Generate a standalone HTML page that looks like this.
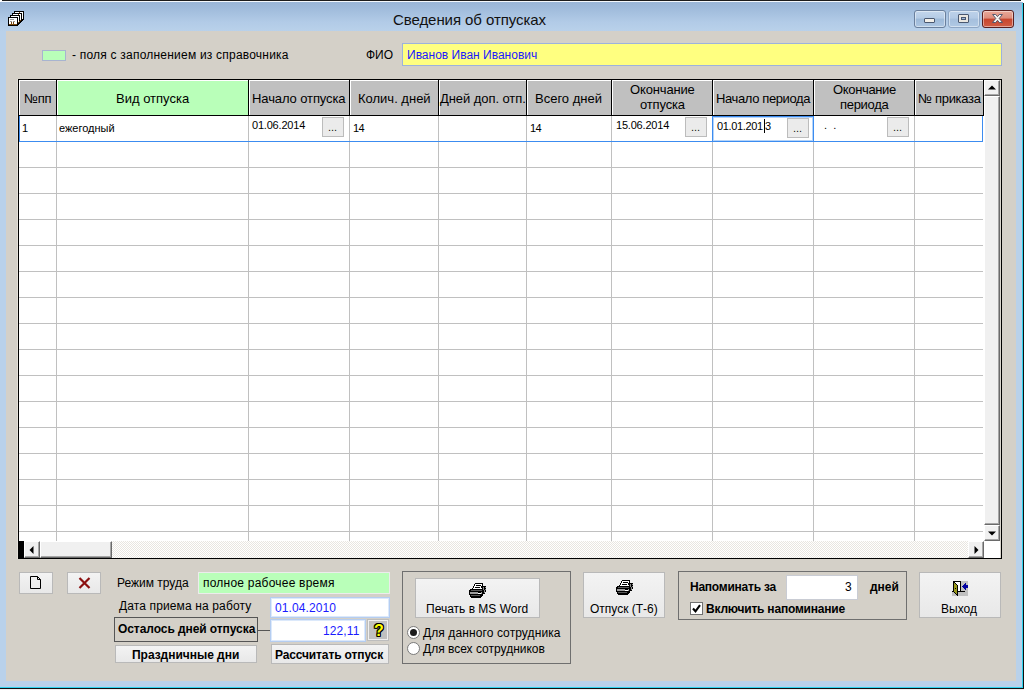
<!DOCTYPE html>
<html lang="ru">
<head>
<meta charset="utf-8">
<title>Сведения об отпусках</title>
<style>
html,body{margin:0;padding:0;}
body{width:1024px;height:690px;position:relative;overflow:hidden;background:#b9d1ea;font-family:"Liberation Sans",sans-serif;font-size:12px;color:#000;}
.a,.t{position:absolute;}
.t{white-space:nowrap;line-height:1;}
.b{font-weight:bold;}
.blue{color:#1a1aff;}
#titlebar{left:0;top:0;width:1024px;height:31px;background:linear-gradient(#98b4d6 0px,#9fbbdb 8px,#b2cbe7 22px,#b9d1ea 31px);}
#client{left:6px;top:31px;width:1010px;height:650px;background:#d4d0c8;}
.hd{position:absolute;top:80px;height:35px;background:#c0c0c0;border-left:1px solid #fff;border-top:1px solid #fff;box-sizing:border-box;}
.vl{position:absolute;top:79px;width:1px;height:37px;background:#000;}
.gv{position:absolute;top:116px;width:1px;height:425px;background:#c0c0c0;}
.gh{position:absolute;left:19px;width:964px;height:1px;background:#c0c0c0;}
.btn{position:absolute;box-sizing:border-box;background:linear-gradient(#f3f3f3,#e8e8e8);border:1px solid #b9b9b9;}
.dots{position:absolute;box-sizing:border-box;background:#ebebeb;border:1px solid #bcbcbc;}
.grp{position:absolute;box-sizing:border-box;border:1px solid #6f6f6f;}
</style>
</head>
<body>
<div class="a" style="left:0;top:0;width:1024px;height:690px;background:#b9d1ea;"></div>
<div id="titlebar" class="a"></div>
<div class="a" style="left:0px;top:0px;width:1024px;height:1px;background:#1c1c1c;"></div>
<div class="a" style="left:0px;top:1px;width:1024px;height:1px;background:#f4f8fc;"></div>
<div class="a" style="left:0px;top:688px;width:1024px;height:1px;background:#101010;"></div>
<div class="a" style="left:0px;top:687px;width:1023px;height:1px;background:#2fd3ee;"></div>
<div class="a" style="left:0px;top:689px;width:1024px;height:1px;background:#f3eeee;"></div>
<div class="a" style="left:1023px;top:2px;width:1px;height:687px;background:#101010;"></div>
<div class="a" style="left:1022px;top:3px;width:1px;height:685px;background:#2fd3ee;"></div>
<div class="a" style="left:1022px;top:0px;width:2px;height:2px;background:#fff;"></div>
<div class="a" style="left:1021px;top:0px;width:1px;height:1px;background:#fff;"></div>
<div class="a" style="left:1023px;top:2px;width:1px;height:1px;background:#fff;"></div>
<div class="a" style="left:0px;top:0px;width:2px;height:1px;background:#fff;"></div>
<div class="a" style="left:0px;top:1px;width:1px;height:1px;background:#fff;"></div>
<div id="client" class="a"></div>
<span class="t" style="left:393px;top:12px;font-size:15px;letter-spacing:-0.07px;color:#111;">Сведения об отпусках</span>
<svg class="a" style="left:8px;top:11px" width="16" height="15" viewBox="0 0 16 15" shape-rendering="crispEdges"><rect x="6" y="0" width="10" height="1" fill="#000"/><rect x="6" y="1" width="1" height="1" fill="#000"/><rect x="7" y="1" width="4" height="1" fill="#fff"/><rect x="11" y="1" width="1" height="1" fill="#7a4a12"/><rect x="12" y="1" width="3" height="1" fill="#fff"/><rect x="15" y="1" width="1" height="1" fill="#000"/><rect x="4" y="2" width="10" height="1" fill="#000"/><rect x="14" y="2" width="1" height="1" fill="#fff"/><rect x="15" y="2" width="1" height="1" fill="#000"/><rect x="4" y="3" width="1" height="1" fill="#000"/><rect x="5" y="3" width="5" height="1" fill="#fff"/><rect x="10" y="3" width="1" height="1" fill="#7a4a12"/><rect x="11" y="3" width="2" height="1" fill="#fff"/><rect x="13" y="3" width="1" height="1" fill="#000"/><rect x="14" y="3" width="1" height="1" fill="#fff"/><rect x="15" y="3" width="1" height="1" fill="#000"/><rect x="2" y="4" width="10" height="1" fill="#000"/><rect x="12" y="4" width="1" height="1" fill="#fff"/><rect x="13" y="4" width="1" height="1" fill="#000"/><rect x="14" y="4" width="1" height="1" fill="#fff"/><rect x="15" y="4" width="1" height="1" fill="#000"/><rect x="2" y="5" width="1" height="1" fill="#000"/><rect x="3" y="5" width="8" height="1" fill="#fff"/><rect x="11" y="5" width="1" height="1" fill="#000"/><rect x="12" y="5" width="1" height="1" fill="#fff"/><rect x="13" y="5" width="1" height="1" fill="#000"/><rect x="14" y="5" width="1" height="1" fill="#fff"/><rect x="15" y="5" width="1" height="1" fill="#000"/><rect x="0" y="6" width="10" height="1" fill="#000"/><rect x="10" y="6" width="1" height="1" fill="#fff"/><rect x="11" y="6" width="1" height="1" fill="#000"/><rect x="12" y="6" width="1" height="1" fill="#fff"/><rect x="13" y="6" width="1" height="1" fill="#000"/><rect x="14" y="6" width="1" height="1" fill="#fff"/><rect x="15" y="6" width="1" height="1" fill="#000"/><rect x="0" y="7" width="1" height="1" fill="#000"/><rect x="1" y="7" width="8" height="1" fill="#fff"/><rect x="9" y="7" width="1" height="1" fill="#000"/><rect x="10" y="7" width="1" height="1" fill="#fff"/><rect x="11" y="7" width="1" height="1" fill="#000"/><rect x="12" y="7" width="1" height="1" fill="#fff"/><rect x="13" y="7" width="1" height="1" fill="#000"/><rect x="14" y="7" width="1" height="1" fill="#fff"/><rect x="15" y="7" width="1" height="1" fill="#000"/><rect x="0" y="8" width="1" height="1" fill="#000"/><rect x="1" y="8" width="1" height="1" fill="#fff"/><rect x="2" y="8" width="4" height="1" fill="#9a9a9a"/><rect x="6" y="8" width="3" height="1" fill="#fff"/><rect x="9" y="8" width="1" height="1" fill="#000"/><rect x="10" y="8" width="1" height="1" fill="#fff"/><rect x="11" y="8" width="1" height="1" fill="#000"/><rect x="12" y="8" width="1" height="1" fill="#fff"/><rect x="13" y="8" width="3" height="1" fill="#000"/><rect x="0" y="9" width="1" height="1" fill="#000"/><rect x="1" y="9" width="8" height="1" fill="#fff"/><rect x="9" y="9" width="1" height="1" fill="#000"/><rect x="10" y="9" width="1" height="1" fill="#fff"/><rect x="11" y="9" width="1" height="1" fill="#000"/><rect x="12" y="9" width="1" height="1" fill="#7a4a12"/><rect x="13" y="9" width="2" height="1" fill="#000"/><rect x="0" y="10" width="1" height="1" fill="#000"/><rect x="1" y="10" width="1" height="1" fill="#fff"/><rect x="2" y="10" width="2" height="1" fill="#9a9a9a"/><rect x="4" y="10" width="1" height="1" fill="#fff"/><rect x="5" y="10" width="2" height="1" fill="#9a9a9a"/><rect x="7" y="10" width="2" height="1" fill="#fff"/><rect x="9" y="10" width="1" height="1" fill="#000"/><rect x="10" y="10" width="1" height="1" fill="#fff"/><rect x="11" y="10" width="1" height="1" fill="#7a4a12"/><rect x="12" y="10" width="2" height="1" fill="#000"/><rect x="0" y="11" width="1" height="1" fill="#000"/><rect x="1" y="11" width="2" height="1" fill="#fff"/><rect x="3" y="11" width="1" height="1" fill="#7a4a12"/><rect x="4" y="11" width="1" height="1" fill="#fff"/><rect x="5" y="11" width="1" height="1" fill="#7a4a12"/><rect x="6" y="11" width="3" height="1" fill="#fff"/><rect x="9" y="11" width="1" height="1" fill="#000"/><rect x="10" y="11" width="1" height="1" fill="#7a4a12"/><rect x="11" y="11" width="2" height="1" fill="#000"/><rect x="0" y="12" width="1" height="1" fill="#000"/><rect x="1" y="12" width="2" height="1" fill="#fff"/><rect x="3" y="12" width="1" height="1" fill="#7a4a12"/><rect x="4" y="12" width="1" height="1" fill="#fff"/><rect x="5" y="12" width="1" height="1" fill="#7a4a12"/><rect x="6" y="12" width="3" height="1" fill="#fff"/><rect x="9" y="12" width="3" height="1" fill="#000"/><rect x="0" y="13" width="1" height="1" fill="#000"/><rect x="1" y="13" width="8" height="1" fill="#7a4a12"/><rect x="9" y="13" width="2" height="1" fill="#000"/><rect x="0" y="14" width="10" height="1" fill="#000"/></svg>
<div class="a" style="left:914px;top:10px;width:32px;height:18px;box-sizing:border-box;border:1px solid #6a7f9c;border-radius:3px;background:linear-gradient(#c3d6ec 0%,#b4cbe5 45%,#9db9d8 50%,#adc6e2 100%);box-shadow:inset 0 0 0 1px rgba(255,255,255,.45);"></div>
<div class="a" style="left:948px;top:10px;width:32px;height:18px;box-sizing:border-box;border:1px solid #8ea6c4;border-radius:3px;background:linear-gradient(#bdd2ea 0%,#b3cae5 45%,#a5bfdd 50%,#b0c9e4 100%);box-shadow:inset 0 0 0 1px rgba(255,255,255,.45);"></div>
<div class="a" style="left:982px;top:10px;width:32px;height:18px;box-sizing:border-box;border:1px solid #5a1f1f;border-radius:3px;background:linear-gradient(#e9a99a 0%,#dd8c7b 45%,#c8452d 50%,#cf5d45 100%);box-shadow:inset 0 0 0 1px rgba(255,255,255,.45);"></div>
<div class="a" style="left:924px;top:18px;width:11px;height:5px;box-sizing:border-box;background:#f2efe9;border:1px solid #4a5870;border-radius:1px;"></div>
<div class="a" style="left:958px;top:14px;width:11px;height:9px;box-sizing:border-box;background:#e9e6e0;border:1px solid #4a5870;border-radius:1px;"></div>
<div class="a" style="left:961px;top:17px;width:5px;height:3px;box-sizing:border-box;background:#9fb6d8;border:1px solid #4a5870;"></div>
<svg class="a" style="left:992px;top:14px" width="11" height="9" viewBox="0 0 11 9">
<path d="M0.6 0.5h3.1L5.5 2.6 7.3 0.5h3.1L7.2 4.4 10.5 8.5H7.3L5.5 6.3 3.7 8.5H0.5l3.3-4.1z" fill="#f6f4f0" stroke="#47506a" stroke-width="0.9"/></svg>
<div class="a" style="left:42px;top:50px;width:24px;height:11px;background:#b9ffb9;box-sizing:border-box;border:1px solid #a8b4d0;"></div>
<span class="t" style="left:72px;top:49px;font-size:12px;letter-spacing:0.215px;">- поля с заполнением из справочника</span>
<span class="t" style="left:366px;top:49px;font-size:12px;">ФИО</span>
<div class="a" style="left:402px;top:43px;width:600px;height:23px;background:#ffff80;box-sizing:border-box;border:1px solid #9db3dc;"></div>
<span class="t blue" style="left:407px;top:49px;font-size:12px;">Иванов Иван Иванович</span>
<div class="a" style="left:17px;top:79px;width:1px;height:480px;background:#e4e0d8;"></div>
<div class="a" style="left:18px;top:79px;width:984px;height:480px;background:#000;"></div>
<div class="a" style="left:19px;top:80px;width:965px;height:461px;background:#fff;"></div>
<div class="hd" style="left:19px;width:37px;background:#c0c0c0;border-color:#ffffff;"></div>
<div class="hd" style="left:57px;width:191px;background:#b9ffb9;border-color:#ffffff;"></div>
<div class="hd" style="left:249px;width:100px;background:#c0c0c0;border-color:#ffffff;"></div>
<div class="hd" style="left:350px;width:88px;background:#c0c0c0;border-color:#ffffff;"></div>
<div class="hd" style="left:439px;width:87px;background:#c0c0c0;border-color:#ffffff;"></div>
<div class="hd" style="left:527px;width:84px;background:#c0c0c0;border-color:#ffffff;"></div>
<div class="hd" style="left:612px;width:100px;background:#c0c0c0;border-color:#ffffff;"></div>
<div class="hd" style="left:713px;width:100px;background:#c0c0c0;border-color:#ffffff;"></div>
<div class="hd" style="left:814px;width:100px;background:#c0c0c0;border-color:#ffffff;"></div>
<div class="hd" style="left:915px;width:68px;background:#c0c0c0;border-color:#ffffff;"></div>
<div class="vl" style="left:56px"></div>
<div class="vl" style="left:248px"></div>
<div class="vl" style="left:349px"></div>
<div class="vl" style="left:438px"></div>
<div class="vl" style="left:526px"></div>
<div class="vl" style="left:611px"></div>
<div class="vl" style="left:712px"></div>
<div class="vl" style="left:813px"></div>
<div class="vl" style="left:914px"></div>
<div class="vl" style="left:983px"></div>
<div class="a" style="left:19px;top:115px;width:965px;height:1px;background:#000;"></div>
<div class="gv" style="left:56px"></div>
<div class="gv" style="left:248px"></div>
<div class="gv" style="left:349px"></div>
<div class="gv" style="left:438px"></div>
<div class="gv" style="left:526px"></div>
<div class="gv" style="left:611px"></div>
<div class="gv" style="left:712px"></div>
<div class="gv" style="left:813px"></div>
<div class="gv" style="left:914px"></div>
<div class="gh" style="top:141px"></div>
<div class="gh" style="top:167px"></div>
<div class="gh" style="top:193px"></div>
<div class="gh" style="top:219px"></div>
<div class="gh" style="top:245px"></div>
<div class="gh" style="top:271px"></div>
<div class="gh" style="top:297px"></div>
<div class="gh" style="top:323px"></div>
<div class="gh" style="top:349px"></div>
<div class="gh" style="top:375px"></div>
<div class="gh" style="top:401px"></div>
<div class="gh" style="top:427px"></div>
<div class="gh" style="top:453px"></div>
<div class="gh" style="top:479px"></div>
<div class="gh" style="top:505px"></div>
<div class="gh" style="top:531px"></div>
<span class="t" style="left:24px;top:92px;font-size:13px;letter-spacing:-0.3px;">№пп</span>
<span class="t" style="left:116px;top:92px;font-size:13px;">Вид отпуска</span>
<span class="t" style="left:252px;top:92px;font-size:13px;letter-spacing:-0.1px;">Начало отпуска</span>
<span class="t" style="left:358px;top:92px;font-size:13px;">Колич. дней</span>
<span class="t" style="left:440px;top:92px;font-size:13px;letter-spacing:-0.07px;">Дней доп. отп.</span>
<span class="t" style="left:535px;top:92px;font-size:13px;">Всего дней</span>
<span class="t" style="left:630px;top:83px;font-size:13px;letter-spacing:-0.15px;">Окончание</span>
<span class="t" style="left:640px;top:98px;font-size:13px;letter-spacing:-0.15px;">отпуска</span>
<span class="t" style="left:716px;top:92px;font-size:13px;letter-spacing:-0.38px;">Начало периода</span>
<span class="t" style="left:833px;top:83px;font-size:13px;letter-spacing:-0.35px;">Окончание</span>
<span class="t" style="left:840px;top:98px;font-size:13px;letter-spacing:-0.3px;">периода</span>
<span class="t" style="left:918px;top:92px;font-size:13px;letter-spacing:-0.3px;">№ приказа</span>
<div class="a" style="left:19px;top:116px;width:964px;height:26px;box-sizing:border-box;border:1px solid #3c8cf0;border-top:none;"></div>
<span class="t" style="left:22px;top:123px;font-size:11px;">1</span>
<span class="t" style="left:59px;top:123px;font-size:11px;">ежегодный</span>
<span class="t" style="left:252px;top:120px;font-size:11px;letter-spacing:-0.2px;">01.06.2014</span>
<span class="t" style="left:353px;top:123px;font-size:11px;letter-spacing:-0.5px;">14</span>
<span class="t" style="left:530px;top:123px;font-size:11px;letter-spacing:-0.5px;">14</span>
<span class="t" style="left:616px;top:120px;font-size:11px;letter-spacing:-0.2px;">15.06.2014</span>
<span class="t" style="left:824px;top:120px;font-size:11px;">.&nbsp;&nbsp;.</span>
<div class="a" style="left:712px;top:116px;width:102px;height:26px;background:#fff;box-sizing:border-box;border:1px solid #3c8cf0;box-shadow:inset 0 0 0 1px #b5d4f9;"></div>
<span class="t" style="left:717px;top:121px;font-size:11px;letter-spacing:-0.35px;">01.01.201<span style="letter-spacing:0;margin-left:2.1px">3</span></span>
<div class="a" style="left:764px;top:119px;width:1px;height:14px;background:#000;"></div>
<div class="dots" style="left:322px;top:117px;width:22px;height:20px;"></div>
<span class="t" style="left:328px;top:122px;font-size:11px;color:#111;">...</span>
<div class="dots" style="left:685px;top:117px;width:22px;height:20px;"></div>
<span class="t" style="left:691px;top:122px;font-size:11px;color:#111;">...</span>
<div class="dots" style="left:787px;top:118px;width:22px;height:20px;"></div>
<span class="t" style="left:793px;top:123px;font-size:11px;color:#111;">...</span>
<div class="dots" style="left:887px;top:117px;width:22px;height:20px;"></div>
<span class="t" style="left:893px;top:122px;font-size:11px;color:#111;">...</span>
<div class="a" style="left:984px;top:80px;width:16px;height:461px;background:#f0f0f0;"></div>
<div class="a" style="left:1000px;top:80px;width:1px;height:478px;background:#dad6ce;"></div>
<div class="a" style="left:984px;top:80px;width:16px;height:16px;background:#f0f0f0;box-sizing:border-box;border-left:1px solid #fff;border-top:1px solid #fff;border-right:1px solid #6a6a6a;border-bottom:1px solid #6a6a6a;box-shadow:inset -1px -1px 0 #a6a6a6;"></div>
<div class="a" style="left:984px;top:96px;width:16px;height:429px;background:#f0f0f0;box-sizing:border-box;border-left:1px solid #fff;border-top:1px solid #fff;border-right:1px solid #6a6a6a;border-bottom:1px solid #6a6a6a;box-shadow:inset -1px -1px 0 #a6a6a6;"></div>
<div class="a" style="left:984px;top:525px;width:16px;height:16px;background:#f0f0f0;box-sizing:border-box;border-left:1px solid #fff;border-top:1px solid #fff;border-right:1px solid #6a6a6a;border-bottom:1px solid #6a6a6a;box-shadow:inset -1px -1px 0 #a6a6a6;"></div>
<svg class="a" style="left:988px;top:85px" width="8" height="5"><path d="M0 4.5h8L4 0.5z" fill="#000"/></svg>
<svg class="a" style="left:988px;top:531px" width="8" height="5"><path d="M0 0.5h8L4 4.5z" fill="#000"/></svg>
<div class="a" style="left:19px;top:541px;width:965px;height:17px;background:repeating-conic-gradient(#ffffff 0 25%,#e9e6e0 0 50%) 0 0/2px 2px;"></div>
<div class="a" style="left:18px;top:541px;width:6px;height:17px;background:#000;"></div>
<div class="a" style="left:984px;top:541px;width:16px;height:17px;background:#fff;"></div>
<div class="a" style="left:24px;top:541px;width:16px;height:17px;background:#f0f0f0;box-sizing:border-box;border-left:1px solid #fff;border-top:1px solid #fff;border-right:1px solid #6a6a6a;border-bottom:1px solid #6a6a6a;box-shadow:inset -1px -1px 0 #a6a6a6;"></div>
<div class="a" style="left:40px;top:541px;width:72px;height:17px;background:#f0f0f0;box-sizing:border-box;border-left:1px solid #fff;border-top:1px solid #fff;border-right:1px solid #6a6a6a;border-bottom:1px solid #6a6a6a;box-shadow:inset -1px -1px 0 #a6a6a6;"></div>
<div class="a" style="left:968px;top:541px;width:16px;height:17px;background:#f0f0f0;box-sizing:border-box;border-left:1px solid #fff;border-top:1px solid #fff;border-right:1px solid #6a6a6a;border-bottom:1px solid #6a6a6a;box-shadow:inset -1px -1px 0 #a6a6a6;"></div>
<svg class="a" style="left:29px;top:546px" width="5" height="8"><path d="M4.5 0v8L0.5 4z" fill="#000"/></svg>
<svg class="a" style="left:974px;top:546px" width="5" height="8"><path d="M0.5 0v8L4.5 4z" fill="#000"/></svg>
<div class="btn" style="left:19px;top:572px;width:34px;height:22px;"></div>
<svg class="a" style="left:30px;top:576px" width="12" height="14" viewBox="0 0 12 14"><path d="M0.5 0.5h7l3 3v9h-10z" fill="none" stroke="#000"/><path d="M7.5 0.5v3h3" fill="none" stroke="#000"/></svg>
<div class="btn" style="left:67px;top:572px;width:34px;height:22px;"></div>
<svg class="a" style="left:78px;top:577px" width="13" height="12" viewBox="0 0 13 12"><path d="M1.5 1l10 10M11.5 1l-10 10" stroke="#8b1010" stroke-width="2.2" fill="none"/></svg>
<span class="t" style="left:117px;top:577px;font-size:12px;">Режим труда</span>
<div class="a" style="left:198px;top:572px;width:192px;height:22px;background:#b9ffb9;box-sizing:border-box;border:1px solid #ececec;"></div>
<span class="t" style="left:203px;top:577px;font-size:12px;letter-spacing:0.22px;">полное рабочее время</span>
<span class="t" style="left:119px;top:600px;font-size:12px;letter-spacing:0.13px;">Дата приема на работу</span>
<div class="a" style="left:270px;top:597px;width:120px;height:21px;background:#fff;box-sizing:border-box;border:1px solid #b5cdf0;box-shadow:inset 0 0 0 1px #dce9fb;"></div>
<span class="t blue" style="left:275px;top:602px;font-size:12px;letter-spacing:0.1px;">01.04.2010</span>
<div class="grp" style="left:114px;top:617px;width:144px;height:25px;border-color:#555;"></div>
<span class="t b" style="left:118px;top:623px;font-size:12px;letter-spacing:-0.07px;">Осталось дней отпуска</span>
<div class="a" style="left:258px;top:630px;width:12px;height:1px;background:#555;"></div>
<div class="a" style="left:270px;top:619px;width:96px;height:23px;background:#fff;box-sizing:border-box;border:1px solid #b5cdf0;box-shadow:inset 0 0 0 1px #dce9fb;"></div>
<span class="t blue" style="left:323px;top:625px;font-size:12px;letter-spacing:0.1px;">122,11</span>
<div class="a" style="left:367px;top:619px;width:22px;height:22px;background:#c0c0c0;box-sizing:border-box;border:1px solid #bdbdbd;box-shadow:inset 0 0 0 1px #efefef;"></div>
<span class="t b" style="left:374px;top:623px;font-size:16px;color:#ffff00;text-shadow:1px 0 0 #000,-1px 0 0 #000,0 1px 0 #000,0 -1px 0 #000,1px 1px 0 #000,-1px -1px 0 #000,1px -1px 0 #000,-1px 1px 0 #000;">?</span>
<div class="btn" style="left:115px;top:645px;width:142px;height:18px;"></div>
<span class="t b" style="left:132px;top:649px;font-size:12px;letter-spacing:-0.03px;">Праздничные дни</span>
<div class="btn" style="left:271px;top:644px;width:118px;height:20px;"></div>
<span class="t b" style="left:275px;top:649px;font-size:12px;letter-spacing:-0.13px;">Рассчитать отпуск</span>
<div class="grp" style="left:402px;top:571px;width:169px;height:93px;"></div>
<div class="btn" style="left:415px;top:578px;width:125px;height:40px;"></div>
<svg class="a" style="left:469px;top:583px" width="17" height="15" viewBox="0 0 17 15" shape-rendering="crispEdges"><rect x="6" y="0" width="8" height="1" fill="#000"/><rect x="5" y="1" width="1" height="1" fill="#000"/><rect x="6" y="1" width="7" height="1" fill="#fff"/><rect x="13" y="1" width="1" height="1" fill="#000"/><rect x="5" y="2" width="1" height="1" fill="#000"/><rect x="6" y="2" width="1" height="1" fill="#fff"/><rect x="7" y="2" width="5" height="1" fill="#000"/><rect x="12" y="2" width="1" height="1" fill="#fff"/><rect x="13" y="2" width="1" height="1" fill="#000"/><rect x="4" y="3" width="1" height="1" fill="#000"/><rect x="5" y="3" width="7" height="1" fill="#fff"/><rect x="12" y="3" width="5" height="1" fill="#000"/><rect x="4" y="4" width="1" height="1" fill="#000"/><rect x="5" y="4" width="1" height="1" fill="#fff"/><rect x="6" y="4" width="5" height="1" fill="#000"/><rect x="11" y="4" width="1" height="1" fill="#fff"/><rect x="12" y="4" width="2" height="1" fill="#000"/><rect x="14" y="4" width="1" height="1" fill="#8a8a8a"/><rect x="15" y="4" width="1" height="1" fill="#000"/><rect x="16" y="4" width="1" height="1" fill="#8a8a8a"/><rect x="3" y="5" width="1" height="1" fill="#000"/><rect x="4" y="5" width="9" height="1" fill="#fff"/><rect x="13" y="5" width="1" height="1" fill="#000"/><rect x="14" y="5" width="1" height="1" fill="#8a8a8a"/><rect x="15" y="5" width="2" height="1" fill="#000"/><rect x="1" y="6" width="13" height="1" fill="#000"/><rect x="14" y="6" width="1" height="1" fill="#8a8a8a"/><rect x="15" y="6" width="1" height="1" fill="#000"/><rect x="16" y="6" width="1" height="1" fill="#8a8a8a"/><rect x="0" y="7" width="2" height="1" fill="#000"/><rect x="2" y="7" width="11" height="1" fill="#585858"/><rect x="13" y="7" width="2" height="1" fill="#000"/><rect x="15" y="7" width="1" height="1" fill="#8a8a8a"/><rect x="16" y="7" width="1" height="1" fill="#000"/><rect x="0" y="8" width="15" height="1" fill="#000"/><rect x="15" y="8" width="1" height="1" fill="#8a8a8a"/><rect x="16" y="8" width="1" height="1" fill="#000"/><rect x="0" y="9" width="1" height="1" fill="#000"/><rect x="1" y="9" width="8" height="1" fill="#9c9c9c"/><rect x="9" y="9" width="3" height="1" fill="#000"/><rect x="12" y="9" width="1" height="1" fill="#9c9c9c"/><rect x="13" y="9" width="2" height="1" fill="#000"/><rect x="15" y="9" width="1" height="1" fill="#8a8a8a"/><rect x="0" y="10" width="1" height="1" fill="#000"/><rect x="1" y="10" width="8" height="1" fill="#9c9c9c"/><rect x="9" y="10" width="3" height="1" fill="#fff"/><rect x="12" y="10" width="1" height="1" fill="#9c9c9c"/><rect x="13" y="10" width="3" height="1" fill="#000"/><rect x="0" y="11" width="14" height="1" fill="#000"/><rect x="1" y="12" width="1" height="1" fill="#000"/><rect x="2" y="12" width="9" height="1" fill="#585858"/><rect x="11" y="12" width="3" height="1" fill="#000"/><rect x="1" y="13" width="12" height="1" fill="#000"/><rect x="2" y="14" width="10" height="1" fill="#000"/></svg>
<span class="t" style="left:426px;top:603px;font-size:12px;">Печать в MS Word</span>
<div class="a" style="left:407px;top:626px;width:13px;height:13px;box-sizing:border-box;border-radius:50%;background:#fff;border:1px solid #7a7a7a;"></div>
<div class="a" style="left:410px;top:629px;width:7px;height:7px;border-radius:50%;background:#1c1c1c;"></div>
<div class="a" style="left:407px;top:642px;width:13px;height:13px;box-sizing:border-box;border-radius:50%;background:#fff;border:1px solid #7a7a7a;"></div>
<span class="t" style="left:423px;top:627px;font-size:12px;letter-spacing:0.1px;">Для данного сотрудника</span>
<span class="t" style="left:423px;top:643px;font-size:12px;">Для всех сотрудников</span>
<div class="btn" style="left:583px;top:572px;width:82px;height:46px;"></div>
<svg class="a" style="left:616px;top:580px" width="17" height="15" viewBox="0 0 17 15" shape-rendering="crispEdges"><rect x="6" y="0" width="8" height="1" fill="#000"/><rect x="5" y="1" width="1" height="1" fill="#000"/><rect x="6" y="1" width="7" height="1" fill="#fff"/><rect x="13" y="1" width="1" height="1" fill="#000"/><rect x="5" y="2" width="1" height="1" fill="#000"/><rect x="6" y="2" width="1" height="1" fill="#fff"/><rect x="7" y="2" width="5" height="1" fill="#000"/><rect x="12" y="2" width="1" height="1" fill="#fff"/><rect x="13" y="2" width="1" height="1" fill="#000"/><rect x="4" y="3" width="1" height="1" fill="#000"/><rect x="5" y="3" width="7" height="1" fill="#fff"/><rect x="12" y="3" width="5" height="1" fill="#000"/><rect x="4" y="4" width="1" height="1" fill="#000"/><rect x="5" y="4" width="1" height="1" fill="#fff"/><rect x="6" y="4" width="5" height="1" fill="#000"/><rect x="11" y="4" width="1" height="1" fill="#fff"/><rect x="12" y="4" width="2" height="1" fill="#000"/><rect x="14" y="4" width="1" height="1" fill="#8a8a8a"/><rect x="15" y="4" width="1" height="1" fill="#000"/><rect x="16" y="4" width="1" height="1" fill="#8a8a8a"/><rect x="3" y="5" width="1" height="1" fill="#000"/><rect x="4" y="5" width="9" height="1" fill="#fff"/><rect x="13" y="5" width="1" height="1" fill="#000"/><rect x="14" y="5" width="1" height="1" fill="#8a8a8a"/><rect x="15" y="5" width="2" height="1" fill="#000"/><rect x="1" y="6" width="13" height="1" fill="#000"/><rect x="14" y="6" width="1" height="1" fill="#8a8a8a"/><rect x="15" y="6" width="1" height="1" fill="#000"/><rect x="16" y="6" width="1" height="1" fill="#8a8a8a"/><rect x="0" y="7" width="2" height="1" fill="#000"/><rect x="2" y="7" width="11" height="1" fill="#585858"/><rect x="13" y="7" width="2" height="1" fill="#000"/><rect x="15" y="7" width="1" height="1" fill="#8a8a8a"/><rect x="16" y="7" width="1" height="1" fill="#000"/><rect x="0" y="8" width="15" height="1" fill="#000"/><rect x="15" y="8" width="1" height="1" fill="#8a8a8a"/><rect x="16" y="8" width="1" height="1" fill="#000"/><rect x="0" y="9" width="1" height="1" fill="#000"/><rect x="1" y="9" width="8" height="1" fill="#9c9c9c"/><rect x="9" y="9" width="3" height="1" fill="#000"/><rect x="12" y="9" width="1" height="1" fill="#9c9c9c"/><rect x="13" y="9" width="2" height="1" fill="#000"/><rect x="15" y="9" width="1" height="1" fill="#8a8a8a"/><rect x="0" y="10" width="1" height="1" fill="#000"/><rect x="1" y="10" width="8" height="1" fill="#9c9c9c"/><rect x="9" y="10" width="3" height="1" fill="#fff"/><rect x="12" y="10" width="1" height="1" fill="#9c9c9c"/><rect x="13" y="10" width="3" height="1" fill="#000"/><rect x="0" y="11" width="14" height="1" fill="#000"/><rect x="1" y="12" width="1" height="1" fill="#000"/><rect x="2" y="12" width="9" height="1" fill="#585858"/><rect x="11" y="12" width="3" height="1" fill="#000"/><rect x="1" y="13" width="12" height="1" fill="#000"/><rect x="2" y="14" width="10" height="1" fill="#000"/></svg>
<span class="t" style="left:590px;top:603px;font-size:12px;">Отпуск (Т-6)</span>
<div class="grp" style="left:678px;top:571px;width:229px;height:49px;"></div>
<span class="t b" style="left:690px;top:581px;font-size:12px;letter-spacing:-0.24px;">Напоминать за</span>
<div class="a" style="left:786px;top:575px;width:72px;height:25px;background:#fff;box-sizing:border-box;border:1px solid #c9ccd4;"></div>
<span class="t" style="left:845px;top:581px;font-size:12px;">3</span>
<span class="t b" style="left:870px;top:581px;font-size:12px;">дней</span>
<div class="a" style="left:690px;top:602px;width:13px;height:13px;background:#fff;box-sizing:border-box;border:1px solid #707070;"></div>
<svg class="a" style="left:692px;top:604px" width="9" height="9" viewBox="0 0 9 9"><path d="M1 4.5l2.5 2.8L8 1.2" stroke="#000" stroke-width="2.1" fill="none"/></svg>
<span class="t b" style="left:706px;top:603px;font-size:12px;letter-spacing:-0.2px;">Включить напоминание</span>
<div class="btn" style="left:919px;top:572px;width:82px;height:46px;"></div>
<svg class="a" style="left:952px;top:581px" width="16" height="15" viewBox="0 0 16 15" shape-rendering="crispEdges"><rect x="1" y="0" width="8" height="1" fill="#000"/><rect x="9" y="0" width="7" height="1" fill="#c0c0c0"/><rect x="1" y="1" width="2" height="1" fill="#000"/><rect x="3" y="1" width="5" height="1" fill="#fff"/><rect x="8" y="1" width="1" height="1" fill="#000"/><rect x="9" y="1" width="7" height="1" fill="#c0c0c0"/><rect x="1" y="2" width="1" height="1" fill="#000"/><rect x="2" y="2" width="1" height="1" fill="#98981a"/><rect x="3" y="2" width="1" height="1" fill="#000"/><rect x="4" y="2" width="4" height="1" fill="#fff"/><rect x="8" y="2" width="1" height="1" fill="#000"/><rect x="9" y="2" width="4" height="1" fill="#c0c0c0"/><rect x="13" y="2" width="1" height="1" fill="#0000a0"/><rect x="14" y="2" width="2" height="1" fill="#c0c0c0"/><rect x="1" y="3" width="1" height="1" fill="#000"/><rect x="2" y="3" width="2" height="1" fill="#98981a"/><rect x="4" y="3" width="1" height="1" fill="#000"/><rect x="5" y="3" width="3" height="1" fill="#fff"/><rect x="8" y="3" width="1" height="1" fill="#000"/><rect x="9" y="3" width="3" height="1" fill="#c0c0c0"/><rect x="12" y="3" width="2" height="1" fill="#0000a0"/><rect x="14" y="3" width="2" height="1" fill="#c0c0c0"/><rect x="1" y="4" width="1" height="1" fill="#000"/><rect x="2" y="4" width="3" height="1" fill="#98981a"/><rect x="5" y="4" width="1" height="1" fill="#000"/><rect x="6" y="4" width="2" height="1" fill="#fff"/><rect x="8" y="4" width="1" height="1" fill="#000"/><rect x="9" y="4" width="2" height="1" fill="#c0c0c0"/><rect x="11" y="4" width="5" height="1" fill="#0000a0"/><rect x="1" y="5" width="1" height="1" fill="#000"/><rect x="2" y="5" width="3" height="1" fill="#98981a"/><rect x="5" y="5" width="1" height="1" fill="#000"/><rect x="6" y="5" width="2" height="1" fill="#fff"/><rect x="8" y="5" width="1" height="1" fill="#000"/><rect x="9" y="5" width="1" height="1" fill="#c0c0c0"/><rect x="10" y="5" width="6" height="1" fill="#0000a0"/><rect x="1" y="6" width="1" height="1" fill="#000"/><rect x="2" y="6" width="3" height="1" fill="#98981a"/><rect x="5" y="6" width="1" height="1" fill="#000"/><rect x="6" y="6" width="2" height="1" fill="#fff"/><rect x="8" y="6" width="1" height="1" fill="#000"/><rect x="9" y="6" width="2" height="1" fill="#c0c0c0"/><rect x="11" y="6" width="5" height="1" fill="#0000a0"/><rect x="1" y="7" width="1" height="1" fill="#000"/><rect x="2" y="7" width="1" height="1" fill="#98981a"/><rect x="3" y="7" width="1" height="1" fill="#000"/><rect x="4" y="7" width="1" height="1" fill="#98981a"/><rect x="5" y="7" width="1" height="1" fill="#000"/><rect x="6" y="7" width="2" height="1" fill="#fff"/><rect x="8" y="7" width="1" height="1" fill="#000"/><rect x="9" y="7" width="3" height="1" fill="#c0c0c0"/><rect x="12" y="7" width="2" height="1" fill="#0000a0"/><rect x="14" y="7" width="2" height="1" fill="#c0c0c0"/><rect x="1" y="8" width="1" height="1" fill="#000"/><rect x="2" y="8" width="3" height="1" fill="#98981a"/><rect x="5" y="8" width="1" height="1" fill="#000"/><rect x="6" y="8" width="2" height="1" fill="#fff"/><rect x="8" y="8" width="1" height="1" fill="#000"/><rect x="9" y="8" width="4" height="1" fill="#c0c0c0"/><rect x="13" y="8" width="1" height="1" fill="#0000a0"/><rect x="14" y="8" width="2" height="1" fill="#c0c0c0"/><rect x="1" y="9" width="1" height="1" fill="#000"/><rect x="2" y="9" width="3" height="1" fill="#98981a"/><rect x="5" y="9" width="1" height="1" fill="#000"/><rect x="6" y="9" width="2" height="1" fill="#fff"/><rect x="8" y="9" width="1" height="1" fill="#000"/><rect x="9" y="9" width="7" height="1" fill="#c0c0c0"/><rect x="0" y="10" width="2" height="1" fill="#000"/><rect x="2" y="10" width="3" height="1" fill="#98981a"/><rect x="5" y="10" width="8" height="1" fill="#000"/><rect x="13" y="10" width="3" height="1" fill="#c0c0c0"/><rect x="0" y="11" width="2" height="1" fill="#c0c0c0"/><rect x="2" y="11" width="1" height="1" fill="#000"/><rect x="3" y="11" width="2" height="1" fill="#98981a"/><rect x="5" y="11" width="1" height="1" fill="#000"/><rect x="6" y="11" width="10" height="1" fill="#c0c0c0"/><rect x="0" y="12" width="3" height="1" fill="#c0c0c0"/><rect x="3" y="12" width="1" height="1" fill="#000"/><rect x="4" y="12" width="1" height="1" fill="#98981a"/><rect x="5" y="12" width="1" height="1" fill="#000"/><rect x="6" y="12" width="10" height="1" fill="#c0c0c0"/><rect x="0" y="13" width="4" height="1" fill="#c0c0c0"/><rect x="4" y="13" width="2" height="1" fill="#000"/><rect x="6" y="13" width="10" height="1" fill="#c0c0c0"/><rect x="0" y="14" width="5" height="1" fill="#c0c0c0"/><rect x="5" y="14" width="1" height="1" fill="#000"/><rect x="6" y="14" width="10" height="1" fill="#c0c0c0"/></svg>
<span class="t" style="left:941px;top:603px;font-size:12px;">Выход</span>
</body>
</html>
